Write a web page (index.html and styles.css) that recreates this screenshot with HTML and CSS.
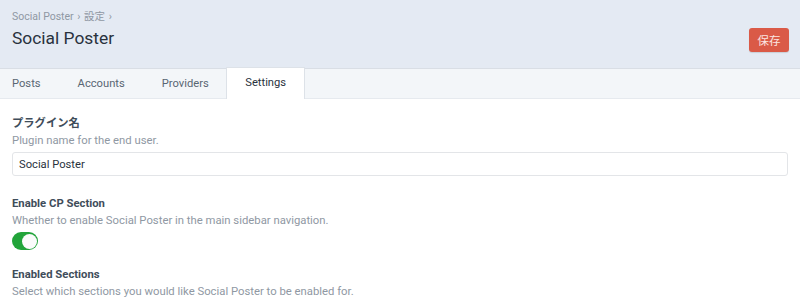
FILE: index.html
```html
<!DOCTYPE html>
<html lang="ja">
<head>
  <meta charset="UTF-8">
  <title>Social Poster</title>
  <link rel="stylesheet" href="styles.css">
</head>
<body>

  <!-- Cabecera -->
  <header class="cabecera">
    <div class="cabecera-texto">
      <div class="migas">Social Poster <span class="sep">›</span> 設定 <span class="sep">›</span></div>
      <h1>Social Poster</h1>
    </div>
    <button class="guardar">保存</button>
  </header>

  <!-- Pestañas -->
  <nav class="pestanas">
    <a class="pestana">Posts</a>
    <a class="pestana">Accounts</a>
    <a class="pestana">Providers</a>
    <a class="pestana activa">Settings</a>
  </nav>

  <!-- Ajustes -->
  <main class="contenido">
    <div class="campo">
      <div class="etiqueta">プラグイン名</div>
      <div class="ayuda">Plugin name for the end user.</div>
      <input class="texto" type="text" value="Social Poster">
    </div>

    <div class="campo campo-interruptor">
      <div class="etiqueta">Enable CP Section</div>
      <div class="ayuda">Whether to enable Social Poster in the main sidebar navigation.</div>
      <div class="interruptor on"><span class="perilla"></span></div>
    </div>

    <div class="campo">
      <div class="etiqueta">Enabled Sections</div>
      <div class="ayuda">Select which sections you would like Social Poster to be enabled for.</div>
    </div>
  </main>

</body>
</html>
```

FILE: styles.css
```css
body {
  font-family: Roboto, "Noto Sans CJK JP", sans-serif;
  margin: 0;
  background-color: #fff;
  color: #3f4d5a;
  font-size: 11.3px;
}

.cabecera {
  background-color: #e4eaf3;
  display: flex;
  justify-content: space-between;
  align-items: flex-start;
  padding: 0 11px 0 12px;
  height: 68px;
}

.migas {
  font-size: 10.5px;
  color: #8f98a3;
  line-height: 14px;
  margin-top: 10px;
}

.migas .sep {
  margin: 0 1px;
}

.cabecera h1 {
  margin: 3px 0 0;
  font-size: 17.4px;
  line-height: 22px;
  font-weight: 400;
  color: #29323d;
}

.guardar {
  margin-top: 28px;
  background-color: #da5a47;
  color: #fbe4e0;
  border: none;
  border-radius: 3px;
  font-family: inherit;
  font-size: 11.5px;
  width: 40px;
  height: 24px;
  padding: 0;
  box-shadow: 0 1px 1px rgba(0,0,0,0.12);
}

.pestanas {
  display: flex;
  height: 29px;
  background-color: #f3f6f9;
  border-top: 1px solid #d9dee5;
  border-bottom: 1px solid #e6eaef;
  font-size: 11.2px;
}

.pestana {
  padding: 0 18.5px;
  line-height: 29px;
  color: #596673;
}

.pestana:first-child {
  padding-left: 12px;
}

.pestana.activa {
  background-color: #fff;
  color: #29323d;
  margin-top: -2px;
  margin-bottom: -1px;
  margin-left: -1px;
  line-height: 30px;
  padding: 0 18px;
  border-top: 1px solid #dde2e8;
  border-left: 1px solid #dde2e8;
  border-right: 1px solid #dde2e8;
}

.contenido {
  padding: 16px 12px 0;
}

.campo {
  margin-bottom: 19px;
}

.campo:last-child {
  margin-bottom: 0;
}

.campo-interruptor {
  margin-bottom: 15.5px;
}

.etiqueta {
  font-weight: 700;
  color: #3f4d5a;
  line-height: 17px;
}

.ayuda {
  color: #8f98a3;
  line-height: 17px;
  margin-bottom: 3px;
}

.texto {
  box-sizing: border-box;
  width: 100%;
  height: 24px;
  border: 1px solid #e3e5e8;
  border-radius: 3px;
  padding: 0 6px;
  font-family: inherit;
  font-size: 11.2px;
  color: #29323d;
}

.interruptor {
  box-sizing: border-box;
  width: 26px;
  height: 18px;
  border-radius: 9px;
  background-color: #22a43a;
  position: relative;
}

.perilla {
  position: absolute;
  top: 1.5px;
  right: 1.5px;
  width: 15px;
  height: 15px;
  border-radius: 50%;
  background-color: #fbfbfb;
}
```
